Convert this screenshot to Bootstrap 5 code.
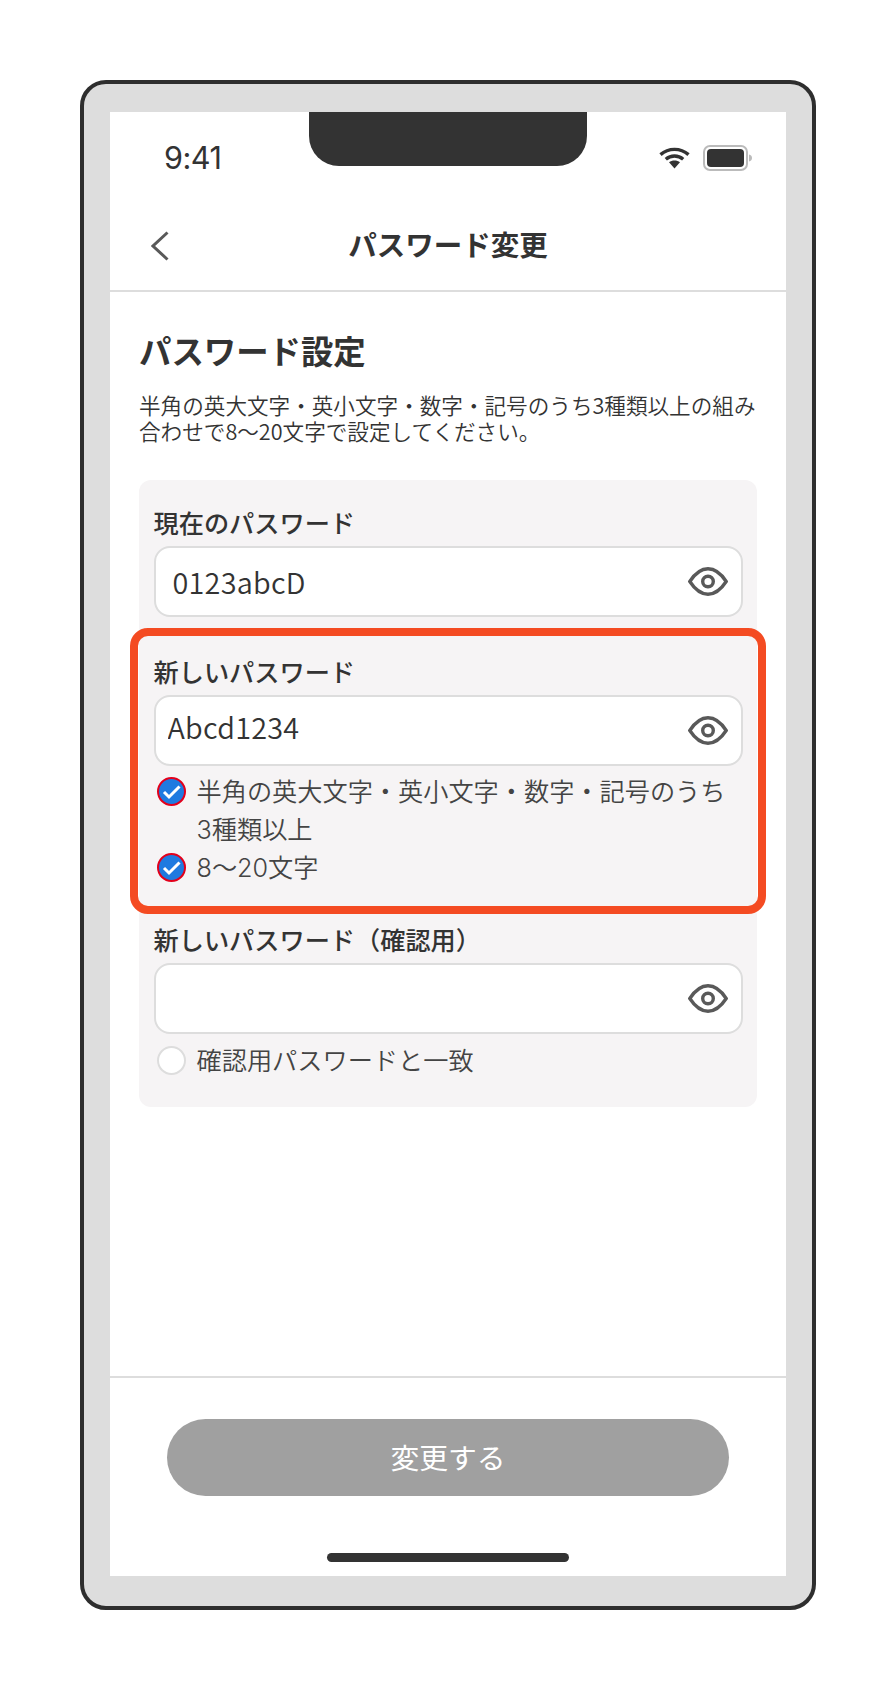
<!DOCTYPE html>
<html lang="ja">
<head>
<meta charset="utf-8">
<title>パスワード変更</title>
<link href="https://cdn.jsdelivr.net/npm/bootstrap@5.3.0/dist/css/bootstrap.min.css" rel="stylesheet">
<style>
body{background:#fff;margin:0;font-family:"Noto Sans CJK JP","Noto Sans",sans-serif;color:#333}
.stage{padding:80px 80px 80px}
.device{width:736px;height:1530px;border:4px solid #2e2e2e;border-radius:26px;background:#ddd;padding:28px 26px 30px}
.screen{width:676px;height:1464px;background:#fff}
.notch{top:0;left:199px;width:278px;height:54px;background:#333;border-radius:0 0 30px 30px}
.statusbar{height:90px;padding:0 33px 0 54px}
.clock{font-family:Inter,sans-serif;font-size:30.6px;line-height:1;color:#333;margin-top:2px;letter-spacing:-.5px}
.status-icons{margin-top:1px}
.wifi-mark{margin-right:1px}
.topbar{height:90px;border-bottom:2px solid #ddd;padding-bottom:4px}
.back-link{left:41px;top:29px;line-height:0}
.topbar-title{font-size:28.5px;font-weight:700;line-height:1;margin:0;color:#333}
.content-area{padding:35px 29px 0}
.section-title{font-size:32.4px;font-weight:700;line-height:46px;margin:0 0 19px;color:#333}
.intro{font-size:21.6px;line-height:26px;margin:0 0 36px;color:#333;font-weight:350}
.panel{background:#f6f4f5;border-radius:12px;padding:24px 14.5px 27px}
.field-label{display:block;font-size:25.2px;font-weight:500;line-height:36px;margin:0 0 6px;color:#333}
.field-box{height:71px}
.field-input.form-control{height:71px;border:2px solid #ddd;border-radius:16px;background:#fff;font-size:28.8px;line-height:40px;color:#333;padding:0 70px 0 17px;box-shadow:none;font-weight:350;letter-spacing:.25px}
.field-input.shifted.form-control{padding:0 70px 8px 12px}
.eye{right:15px;top:21px;line-height:0}
.rule-list{margin:7px 0 0;padding:0;list-style:none}
.rule-list.loose{margin-top:8px}
.rule-item{display:flex;gap:11px;padding-left:3px;font-family:Inter,"Noto Sans CJK JP",sans-serif;font-size:25.2px;line-height:38px;color:#444;font-weight:350}
.rule-mark{flex:none;width:29px;height:29px;margin-top:4px;line-height:0}
.gap-one{margin-top:36px}
.gap-two{margin-top:34px}
.highlight{left:-9px;top:148px;width:636px;height:286px;border:8px solid #f44b22;border-radius:18px;pointer-events:none}
.bottom-area{height:200px;border-top:2px solid #ddd;padding-top:41px}
.submit-btn.btn{width:562px;height:77px;border-radius:39px;background:#a0a0a0;border:0;color:#fff;font-size:28.8px;line-height:1;opacity:1}
.home-bar{width:242px;height:9px;border-radius:5px;background:#333;margin-top:57px}
</style>
</head>
<body>
<div class="stage">
  <div class="device">
    <div class="screen position-relative d-flex flex-column">
      <div class="notch position-absolute"></div>
      <div class="statusbar d-flex align-items-center justify-content-between">
        <span class="clock">9:41</span>
        <span class="status-icons d-flex align-items-center gap-2">
          <svg class="wifi-mark" width="31" height="22" viewBox="0 0 31 22"><g fill="none" stroke="#333" stroke-width="3.4"><path d="M1.500 7.600C9.500 .6 21.500 .6 29.500 7.600"/><path d="M6.800 12.200C11.800 7.900 19.200 7.900 24.200 12.200"/></g><path d="M10 15.200C13 13 18 13 21 15.200L15.500 21.500Z" fill="#333"/></svg>
          <svg width="50" height="26" viewBox="0 0 50 26" class="ms-1"><rect x="1" y="1" width="43" height="24" rx="6" fill="#fff" stroke="#bbb" stroke-width="2"/><rect x="4" y="4" width="37" height="18" rx="4" fill="#333"/><path d="M46 9.500c2 .5 3 1.800 3 3.500s-1 3-3 3.500z" fill="#bbb"/></svg>
        </span>
      </div>
      <header class="topbar position-relative d-flex align-items-center justify-content-center">
        <a class="back-link position-absolute" href="#" aria-label="戻る"><svg width="18" height="30" viewBox="0 0 18 30"><path d="M16.500 1.500 2 15l14.500 13.500" fill="none" stroke="#595959" stroke-width="3"/></svg></a>
        <h1 class="topbar-title">パスワード変更</h1>
      </header>
      <main class="content-area flex-grow-1">
        <h2 class="section-title">パスワード設定</h2>
        <p class="intro">半角の英大文字・英小文字・数字・記号のうち3種類以上の組み<br>合わせで8〜20文字で設定してください。</p>
        <div class="panel position-relative">
          <label class="field-label" for="f1">現在のパスワード</label>
          <div class="field-box position-relative">
            <input id="f1" class="field-input form-control" type="text" value="0123abcD">
            <span class="eye position-absolute"><svg width="40" height="29" viewBox="0 0 40 29"><path d="M1.800 14.500C7.500 5.800 13.500 1.800 20 1.800s12.500 4 18.200 12.700C32.500 23.200 26.500 27.200 20 27.200S7.500 23.200 1.800 14.500Z" fill="none" stroke="#595959" stroke-width="3.400"/><circle cx="20" cy="14.500" r="5.300" fill="none" stroke="#595959" stroke-width="3.400"/></svg></span>
          </div>
          <label class="field-label gap-one" for="f2">新しいパスワード</label>
          <div class="field-box position-relative">
            <input id="f2" class="field-input shifted form-control" type="text" value="Abcd1234">
            <span class="eye position-absolute"><svg width="40" height="29" viewBox="0 0 40 29"><path d="M1.800 14.500C7.500 5.800 13.500 1.800 20 1.800s12.500 4 18.200 12.700C32.500 23.200 26.500 27.200 20 27.200S7.500 23.200 1.800 14.500Z" fill="none" stroke="#595959" stroke-width="3.400"/><circle cx="20" cy="14.500" r="5.300" fill="none" stroke="#595959" stroke-width="3.400"/></svg></span>
          </div>
          <ul class="rule-list">
            <li class="rule-item"><span class="rule-mark"><svg width="29" height="29" viewBox="0 0 29 29"><circle cx="14.500" cy="14.500" r="13.500" fill="#1f7ae0" stroke="#e3001b" stroke-width="2"/><path d="M7 15l5 5L22.500 9.500" fill="none" stroke="#fff" stroke-width="3"/></svg></span><span>半角の英大文字・英小文字・数字・記号のうち<br>3種類以上</span></li>
            <li class="rule-item"><span class="rule-mark"><svg width="29" height="29" viewBox="0 0 29 29"><circle cx="14.500" cy="14.500" r="13.500" fill="#1f7ae0" stroke="#e3001b" stroke-width="2"/><path d="M7 15l5 5L22.500 9.500" fill="none" stroke="#fff" stroke-width="3"/></svg></span><span>8〜20文字</span></li>
          </ul>
          <label class="field-label gap-two" for="f3">新しいパスワード（確認用）</label>
          <div class="field-box position-relative">
            <input id="f3" class="field-input form-control" type="text">
            <span class="eye position-absolute"><svg width="40" height="29" viewBox="0 0 40 29"><path d="M1.800 14.500C7.500 5.800 13.500 1.800 20 1.800s12.500 4 18.200 12.700C32.500 23.200 26.500 27.200 20 27.200S7.500 23.200 1.800 14.500Z" fill="none" stroke="#595959" stroke-width="3.400"/><circle cx="20" cy="14.500" r="5.300" fill="none" stroke="#595959" stroke-width="3.400"/></svg></span>
          </div>
          <ul class="rule-list loose">
            <li class="rule-item"><span class="rule-mark"><svg width="29" height="29" viewBox="0 0 29 29"><circle cx="14.500" cy="14.500" r="13.500" fill="#fff" stroke="#ddd" stroke-width="2"/></svg></span><span>確認用パスワードと一致</span></li>
          </ul>
          <div class="highlight position-absolute"></div>
        </div>
      </main>
      <footer class="bottom-area d-flex flex-column align-items-center">
        <button class="submit-btn btn" type="button" disabled>変更する</button>
        <div class="home-bar"></div>
      </footer>
    </div>
  </div>
</div>
<script src="https://cdn.jsdelivr.net/npm/bootstrap@5.3.0/dist/js/bootstrap.bundle.min.js"></script>
</body>
</html>
